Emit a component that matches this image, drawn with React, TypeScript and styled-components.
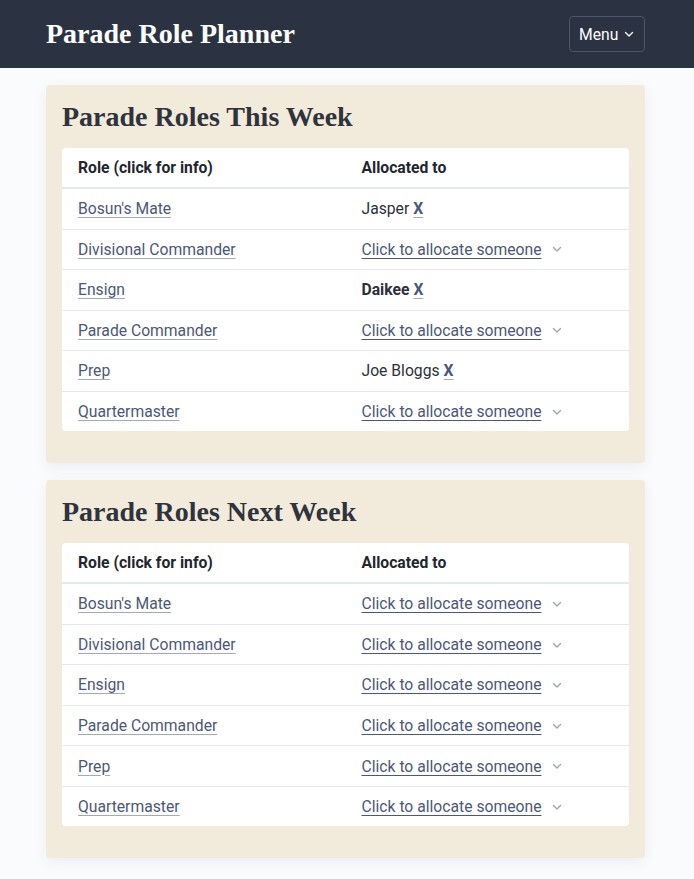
import React from "react";
import styled, { createGlobalStyle } from "styled-components";

const GlobalStyle = createGlobalStyle`
  html, body { margin: 0; padding: 0; }
  body {
    background: #fafbfc;
    font-family: Roboto, "Liberation Sans", Arial, sans-serif;
    color: #2b303b;
  }
  * { box-sizing: border-box; }
`;

const Header = styled.header`
  background: #2b3242;
  height: 68px;
  display: flex;
  align-items: center;
`;

const HeaderInner = styled.div`
  width: 599px;
  margin-left: 46px;
  display: flex;
  align-items: center;
  justify-content: space-between;
`;

const Brand = styled.h1`
  margin: 0;
  font-family: "Liberation Serif", "Times New Roman", serif;
  font-weight: 700;
  font-size: 28px;
  line-height: 32px;
  color: #ffffff;
`;

const MenuButton = styled.button`
  display: flex;
  align-items: center;
  gap: 6px;
  height: 36px;
  width: 76px;
  padding: 0 0 0 9px;
  background: transparent;
  border: 1px solid #4c5569;
  border-radius: 4px;
  color: #ffffff;
  font-family: Roboto, "Liberation Sans", sans-serif;
  font-size: 15.7px;
`;

const Main = styled.main`
  width: 599px;
  margin: 17px 0 0 46px;
  display: flex;
  flex-direction: column;
  gap: 17px;
  padding-bottom: 22px;
`;

const Card = styled.section`
  background: #f2eadb;
  border-radius: 4px;
  padding: 16px 16px 32px;
  box-shadow: 0 4px 14px rgba(40, 55, 100, 0.07);
`;

const CardTitle = styled.h2`
  margin: 0 0 15px;
  font-family: "Liberation Serif", "Times New Roman", serif;
  font-weight: 700;
  font-size: 28px;
  line-height: 32px;
  color: #2f333b;
`;

const Table = styled.table`
  width: 100%;
  border-collapse: collapse;
  background: #ffffff;
  border-radius: 4px;
  overflow: hidden;
  table-layout: fixed;
  font-size: 15.7px;
`;

const Th = styled.th`
  text-align: left;
  font-weight: 700;
  padding: 8px 16px;
  line-height: 23px;
  color: #22262e;
  border-bottom: 2px solid #e5e8ef;
`;

const Tr = styled.tr`
  & + & td { border-top: 1px solid #e6e8ee; }
`;

const Td = styled.td`
  padding: 8.2px 16px 8px;
  line-height: 23.35px;
  color: #2b303b;
`;

const RoleLink = styled.a`
  color: #4b5778;
  text-decoration: underline;
  text-decoration-color: #a2a9bb;
  text-underline-offset: 3px;
  cursor: pointer;
`;

const AllocateLink = styled.a`
  color: #4b5778;
  text-decoration: underline;
  text-decoration-color: #4b5778;
  text-underline-offset: 3px;
  cursor: pointer;
`;

const AllocateWrap = styled.span`
  display: inline-flex;
  align-items: center;
  gap: 11px;
`;

const Name = styled.span<{ $bold?: boolean }>`
  font-weight: ${(p) => (p.$bold ? 700 : 400)};
  color: #2b303b;
`;

const RemoveLink = styled.a`
  font-weight: 700;
  color: #4b5778;
  text-decoration: underline;
  text-decoration-color: #a2a9bb;
  text-underline-offset: 3px;
  margin-left: 4px;
  cursor: pointer;
`;

const Chevron = ({ color = "#9aa1b1", size = 10 }: { color?: string; size?: number }) => (
  <svg width={size} height={size} viewBox="0 0 10 10" fill="none">
    <path d="M1.5 3.5 L5 7 L8.5 3.5" stroke={color} strokeWidth="1.3" strokeLinecap="round" strokeLinejoin="round" />
  </svg>
);

type Row = { role: string; who?: string; bold?: boolean };

const thisWeek: Row[] = [
  { role: "Bosun's Mate", who: "Jasper" },
  { role: "Divisional Commander" },
  { role: "Ensign", who: "Daikee", bold: true },
  { role: "Parade Commander" },
  { role: "Prep", who: "Joe Bloggs" },
  { role: "Quartermaster" },
];

const nextWeek: Row[] = [
  { role: "Bosun's Mate" },
  { role: "Divisional Commander" },
  { role: "Ensign" },
  { role: "Parade Commander" },
  { role: "Prep" },
  { role: "Quartermaster" },
];

const RolesCard = ({ title, rows }: { title: string; rows: Row[] }) => (
  <Card>
    <CardTitle>{title}</CardTitle>
    <Table>
      <thead>
        <tr>
          <Th>Role (click for info)</Th>
          <Th>Allocated to</Th>
        </tr>
      </thead>
      <tbody>
        {rows.map((r) => (
          <Tr key={r.role}>
            <Td>
              <RoleLink>{r.role}</RoleLink>
            </Td>
            <Td>
              {r.who ? (
                <>
                  <Name $bold={r.bold}>{r.who}</Name>
                  <RemoveLink>X</RemoveLink>
                </>
              ) : (
                <AllocateWrap>
                  <AllocateLink>Click to allocate someone</AllocateLink>
                  <Chevron />
                </AllocateWrap>
              )}
            </Td>
          </Tr>
        ))}
      </tbody>
    </Table>
  </Card>
);

export default function App() {
  return (
    <>
      <GlobalStyle />
      <Header>
        <HeaderInner>
          <Brand>Parade Role Planner</Brand>
          <MenuButton>
            Menu
            <Chevron color="#ffffff" size={10} />
          </MenuButton>
        </HeaderInner>
      </Header>
      <Main>
        <RolesCard title="Parade Roles This Week" rows={thisWeek} />
        <RolesCard title="Parade Roles Next Week" rows={nextWeek} />
      </Main>
    </>
  );
}
